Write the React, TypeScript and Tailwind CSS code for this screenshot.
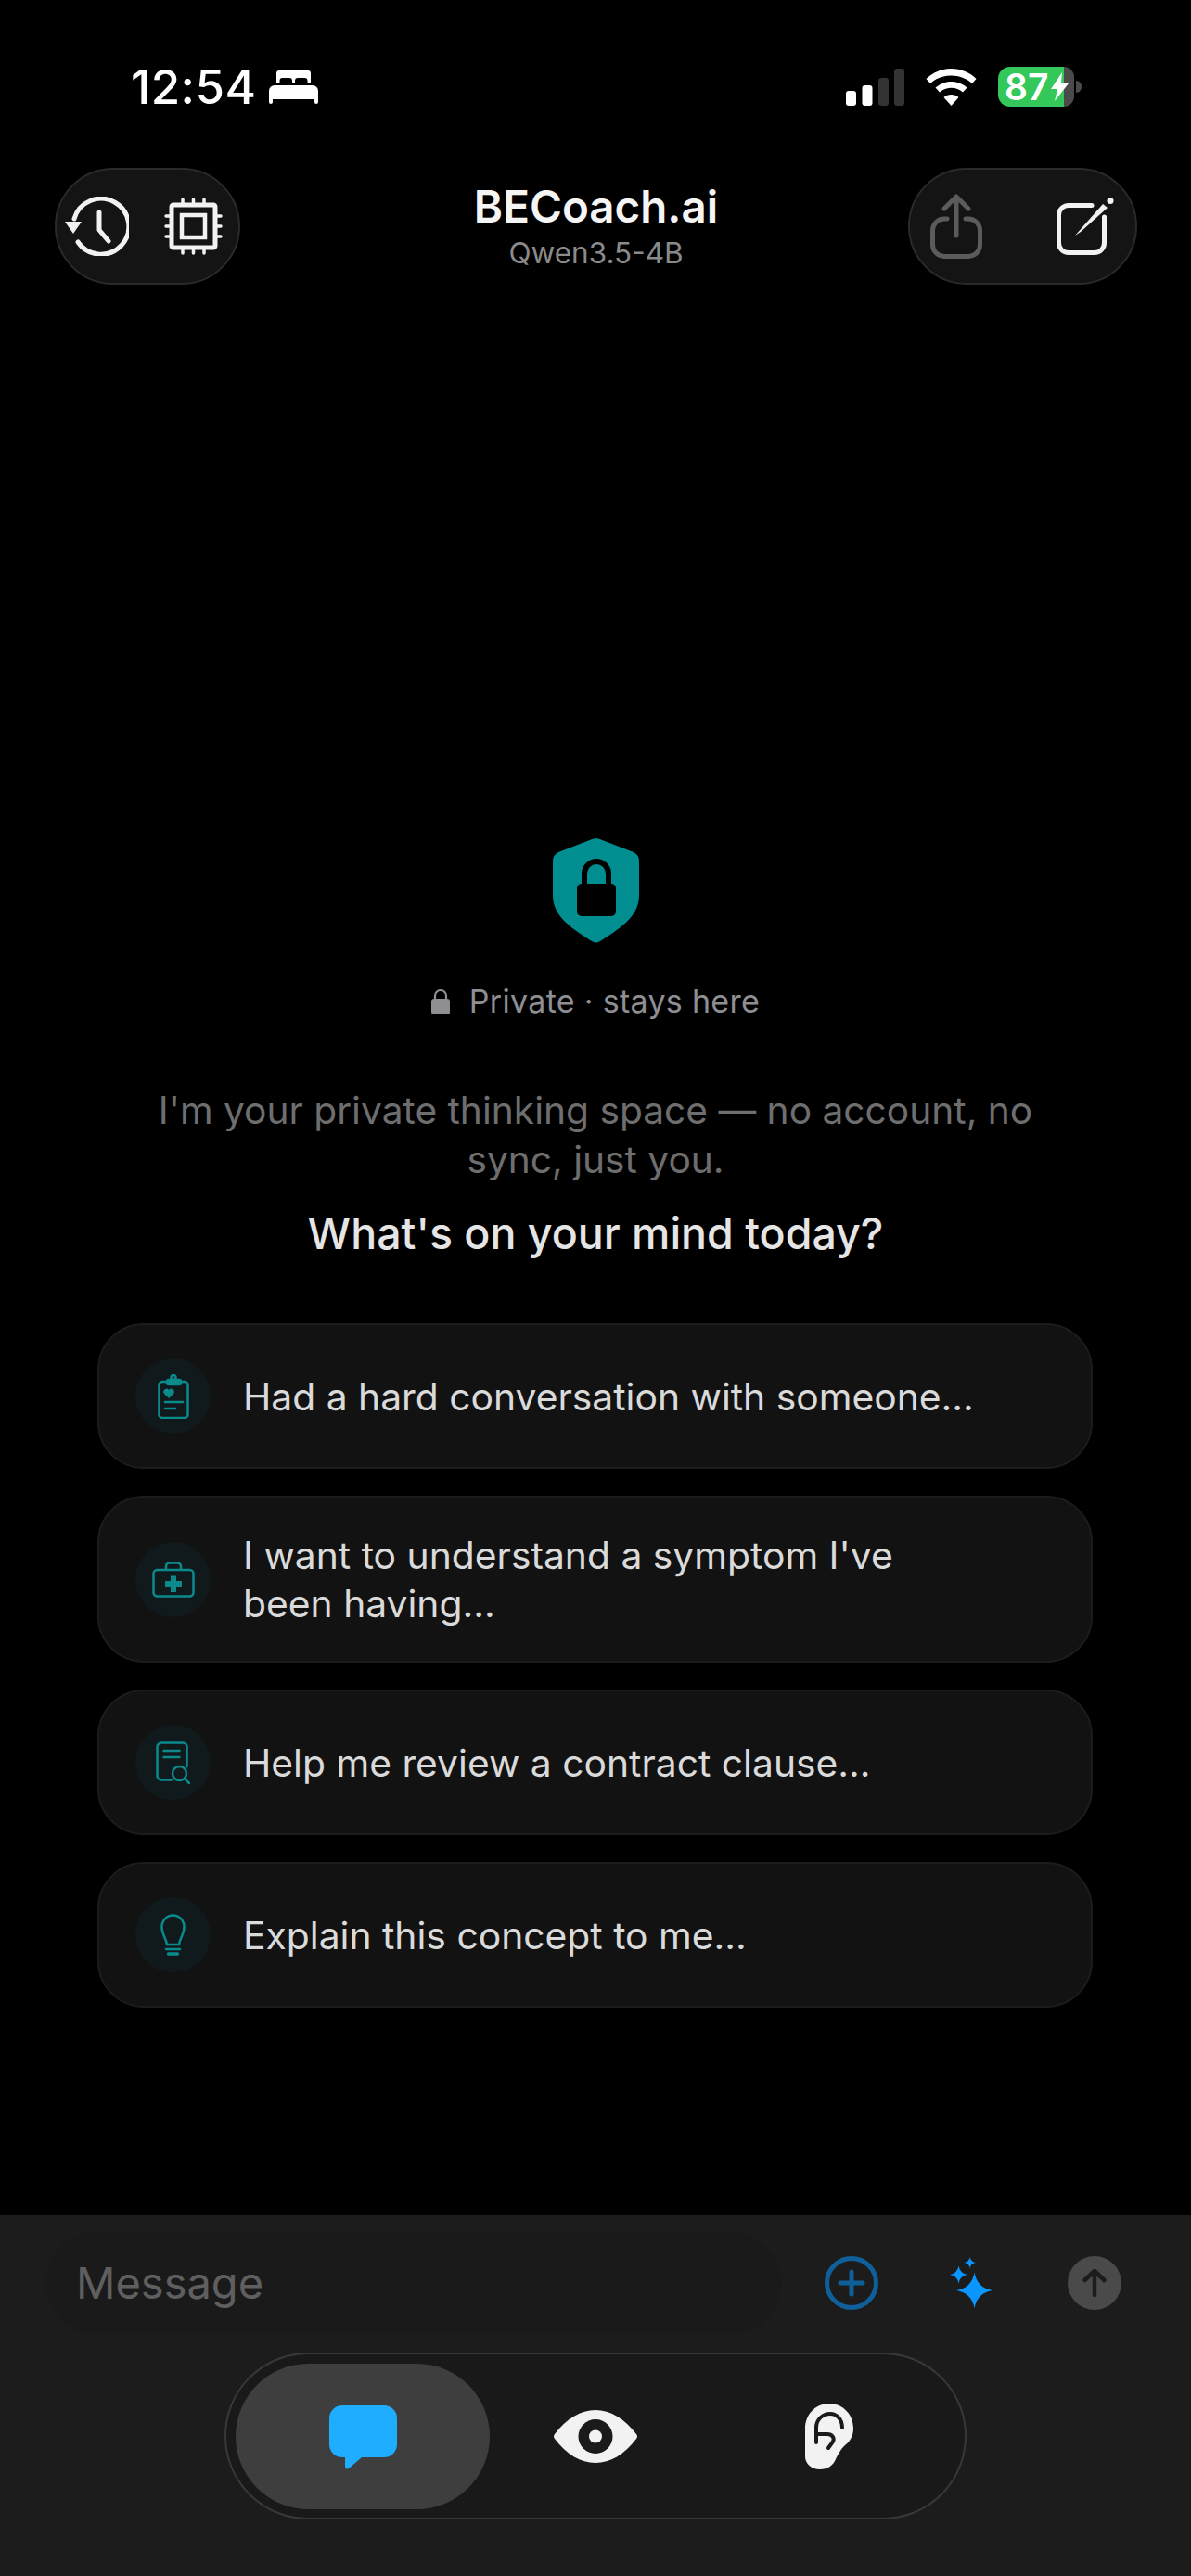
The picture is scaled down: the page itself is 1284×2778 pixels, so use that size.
import React from 'react';

const sans = "font-['Inter','Liberation_Sans',sans-serif]";

function star(cx: number, cy: number, r: number) {
    const k = r * 0.14;
    return `M${cx} ${cy - r}Q${cx + k} ${cy - k} ${cx + r} ${cy}Q${cx + k} ${cy + k} ${cx} ${cy + r}Q${cx - k} ${cy + k} ${cx - r} ${cy}Q${cx - k} ${cy - k} ${cx} ${cy - r}Z`;
}

function BedIcon() {
    return (
        <svg width="53" height="36" viewBox="0 0 53 36" fill="#fff">
            <path fillRule="evenodd" d="M8 3a3 3 0 0 1 3-3h31a3 3 0 0 1 3 3v11h-3.500v-3a3 3 0 0 0-3-3H31a3 3 0 0 0-3 3v3h-3v-3a3 3 0 0 0-3-3h-7.500a3 3 0 0 0-3 3v3H8Z" />
            <path d="M6 16h41a6 6 0 0 1 6 6v12a2 2 0 0 1-4 0v-3H4v3a2 2 0 0 1-4 0V22a6 6 0 0 1 6-6Z" />
        </svg>
    );
}

function SignalIcon() {
    return (
        <svg width="63" height="40" viewBox="0 0 63 40">
            <rect x="0" y="24" width="11" height="16" rx="3" fill="#fff" />
            <rect x="17.500" y="18" width="11" height="22" rx="3" fill="#fff" />
            <rect x="35" y="10" width="11" height="30" rx="3" fill="#333" />
            <rect x="52" y="0" width="11" height="40" rx="3" fill="#333" />
        </svg>
    );
}

function WifiIcon() {
    return (
        <svg width="55" height="40" viewBox="0 0 55 40" fill="#fff">
            <path d="M27.500 0C38 0 47.500 4 54.500 11l-4.500 5C44 10.500 36 7.500 27.500 7.500S11 10.500 5 16L.5 11C7.500 4 17 0 27.500 0Z" />
            <path d="M27.500 14c6.500 0 12.500 2.500 17 6.500l-4.500 5c-3.300-3-7.700-4.700-12.500-4.700s-9.200 1.700-12.500 4.700l-4.500-5c4.500-4 10.500-6.500 17-6.500Z" />
            <path d="M27.500 28c3 0 6 1.200 8 3L27.500 40l-8-9c2-1.800 5-3 8-3Z" />
        </svg>
    );
}

function Battery() {
    return (
        <div className="flex items-center gap-[2px]">
            <div className="relative flex h-[43px] w-[82px]">
                <div className="h-full w-[71px] rounded-l-[13px] bg-[#34c759]" />
                <div className="h-full w-[11px] rounded-r-[13px] bg-[#4a4a4a]" />
                <span className={`absolute left-[7px] top-0 text-[39px] font-semibold leading-[43px] text-white ${sans}`}>87</span>
                <svg className="absolute left-[57px] top-[6px]" width="19" height="31" viewBox="0 0 19 31" fill="#fff">
                    <path d="M12 0 0 18h7L4 31 19 12h-8Z" />
                </svg>
            </div>
            <div className="h-[13px] w-[6px] rounded-r-full bg-[#4a4a4a]" />
        </div>
    );
}

function HistoryIcon() {
    return (
        <svg width="69" height="64" viewBox="0 0 69 64" fill="none" stroke="#f2f2f2" strokeLinecap="round" strokeLinejoin="round">
            <path strokeWidth="5" d="M10 24A30 30 0 1 1 14 49" />
            <path fill="#f2f2f2" stroke="none" d="M0 27h18l-9 13Z" />
            <path strokeWidth="5" d="M37 17v19l10 12" />
        </svg>
    );
}

function ChipIcon() {
    return (
        <svg width="63" height="62" viewBox="0 0 63 62" fill="none" stroke="#f2f2f2">
            <rect x="8" y="8" width="47" height="46" rx="2" strokeWidth="5" />
            <rect x="19" y="19" width="25" height="24" strokeWidth="4.500" />
            <path strokeWidth="3.500" strokeLinecap="round" d="M20 2v5M31.500 2v5M43 2v5M20 55v5M31.500 55v5M43 55v5M2 20h5M2 31h5M2 42h5M56 20h5M56 31h5M56 42h5" />
        </svg>
    );
}

function ShareIcon() {
    return (
        <svg width="56" height="70" viewBox="0 0 56 70" fill="none" stroke="#5b5b5b" strokeWidth="5" strokeLinecap="round" strokeLinejoin="round">
            <path d="M18 27h-3A12.500 12.500 0 0 0 2.500 39.500V55A12.500 12.500 0 0 0 15 67.500h26A12.500 12.500 0 0 0 53.500 55V39.500A12.500 12.500 0 0 0 41 27h-3" />
            <path d="M28 45V3M15 16 28 3l13 13" />
        </svg>
    );
}

function ComposeIcon() {
    return (
        <svg width="62" height="62" viewBox="0 0 62 62" fill="none" stroke="#f2f2f2" strokeLinecap="round">
            <path strokeWidth="5" d="M38 8.500H13A10.500 10.500 0 0 0 2.500 19v30A10.500 10.500 0 0 0 13 59.500h28A10.500 10.500 0 0 0 51.500 49V21" />
            <path fill="#f2f2f2" stroke="none" d="M20 41 50 7l5 4-29 26-6 4Z" />
            <circle cx="58" cy="3.500" r="3.500" fill="#f2f2f2" stroke="none" />
        </svg>
    );
}

function ShieldIcon() {
    return (
        <svg width="93" height="113" viewBox="0 0 93 113">
            <path fill="#008e90" d="M46.500 0Q49 0 52 1.500L87 15Q93 18 93 24V62C93 85 70 99 50 111.500Q46.500 113.500 43 111.500C23 99 0 85 0 62V24Q0 18 6 15L41 1.500Q44 0 46.500 0Z" />
            <rect x="26" y="49" width="42" height="35" rx="5" fill="#000" />
            <path fill="none" stroke="#000" strokeWidth="6" d="M34 50V38a12.500 12.500 0 0 1 26 0v12" />
        </svg>
    );
}

function SmallLock() {
    return (
        <svg width="20" height="27" viewBox="0 0 20 27">
            <rect x="0" y="10" width="20" height="17" rx="3" fill="#8e8e93" />
            <path fill="none" stroke="#8e8e93" strokeWidth="2.200" d="M4 11V7a6 6 0 0 1 12 0v4" />
        </svg>
    );
}

const teal = '#0b8a8c';

function ClipboardIcon() {
    return (
        <svg width="34" height="48" viewBox="0 0 34 48" fill="none" stroke={teal} strokeWidth="2.500" strokeLinecap="round" strokeLinejoin="round">
            <path d="M9 8H5a3.500 3.500 0 0 0-3.500 3.500v32A3.500 3.500 0 0 0 5 47h24a3.500 3.500 0 0 0 3.500-3.500v-32A3.500 3.500 0 0 0 29 8h-4" />
            <rect x="10" y="6" width="15" height="5" rx="2" fill={teal} />
            <circle cx="17" cy="3.500" r="2.500" />
            <path fill={teal} stroke="none" d="M12 26 7 21a3 3 0 0 1 5-4 3 3 0 0 1 5 4Z" />
            <path d="M8 30h19M8 37h11" />
        </svg>
    );
}

function MedkitIcon() {
    return (
        <svg width="46" height="39" viewBox="0 0 46 39" fill="none" stroke={teal} strokeWidth="2.500" strokeLinejoin="round">
            <rect x="1.500" y="9" width="43" height="28.500" rx="4" />
            <path d="M15 9V5a3.500 3.500 0 0 1 3.500-3.500h9A3.500 3.500 0 0 1 31 5v4" />
            <path fill={teal} stroke="none" d="M20 15.500h6v5.500h6v6h-6v6h-6v-6h-6v-6h6Z" />
        </svg>
    );
}

function DocSearchIcon() {
    return (
        <svg width="37" height="46" viewBox="0 0 37 46" fill="none" stroke={teal} strokeWidth="2.500" strokeLinecap="round" strokeLinejoin="round">
            <path d="M17 41.500H6A4.500 4.500 0 0 1 1.500 37V6A4.500 4.500 0 0 1 6 1.500h23A4.500 4.500 0 0 1 33.500 6v21" />
            <path d="M8.500 10h17M8.500 17h17" />
            <circle cx="25.500" cy="34.500" r="7.500" />
            <path d="m31 40 5 5" />
        </svg>
    );
}

function BulbIcon() {
    return (
        <svg width="27" height="46" viewBox="0 0 27 46" fill="none" stroke={teal} strokeWidth="2.500" strokeLinecap="round">
            <path d="M7 33 C6 26 1.500 22 1.500 14 A12 12.500 0 0 1 25.500 14 C25.500 22 21 26 20 33 Z" />
            <path d="M6 38h15" />
            <path d="M8.500 43h10" strokeWidth="3.500" />
        </svg>
    );
}

function PlusCircle() {
    return (
        <svg width="58" height="58" viewBox="0 0 58 58" fill="none" stroke="#0f5f9b" strokeLinecap="round">
            <circle cx="29" cy="29" r="26.500" strokeWidth="5" />
            <path strokeWidth="5" d="M29 17v24M17 29h24" />
        </svg>
    );
}

function SparklesIcon() {
    return (
        <svg width="46" height="56" viewBox="0 0 46 56" fill="#0a96ff">
            <path d={star(26.500, 36, 19.500)} />
            <path d={star(9.500, 19, 9.500)} />
            <path d={star(21.700, 6, 6)} />
        </svg>
    );
}

function SendButton() {
    return (
        <div className="flex size-[58px] items-center justify-center rounded-full bg-[#4a4a4a]">
            <svg width="26" height="32" viewBox="0 0 26 32" fill="none" stroke="#1c1c1c" strokeWidth="4.500" strokeLinecap="round" strokeLinejoin="round">
                <path d="M13 29V3M2.500 13 13 3l10.500 10" />
            </svg>
        </div>
    );
}

function ChatIcon() {
    return (
        <svg width="73" height="69" viewBox="0 0 73 69" fill="#1fadff">
            <path d="M14 0h45a14 14 0 0 1 14 14v28a14 14 0 0 1-14 14H35L21 68q-4 2-4-3v-9h-3A14 14 0 0 1 0 42V14A14 14 0 0 1 14 0Z" />
        </svg>
    );
}

function EyeIcon() {
    return (
        <svg width="90" height="57" viewBox="0 0 90 57">
            <path fill="#f2f2f2" d="M1 26C14 9 29 0 45 0s31 9 44 26q2 2.500 0 5C76 48 61 57 45 57S14 48 1 31q-2-2.500 0-5Z" />
            <circle cx="45" cy="28.500" r="18.500" fill="#1a1a1a" />
            <circle cx="45" cy="28.500" r="7" fill="#f2f2f2" />
        </svg>
    );
}

function EarIcon() {
    return (
        <svg width="52" height="71" viewBox="0 0 52 71">
            <path fill="#f2f2f2" d="M26 0C41 0 52 12 52 27C52 35 48 41 43 45C38 50 36 54 33 60C30 67 24 71 16 71C7 71 0 65 0 57V27C0 12 11 0 26 0Z" />
            <path fill="none" stroke="#1a1a1a" strokeWidth="4" strokeLinecap="round" strokeLinejoin="round" d="M12 42V26C12 17 19 11 27 11C34 11 40 17 40 26M12 33H24C29 33 32 37 30 41L25 48" />
        </svg>
    );
}

const prompts = [
    { icon: <ClipboardIcon />, text: 'Had a hard conversation with someone...' },
    { icon: <MedkitIcon />, text: "I want to understand a symptom I've been having..." },
    { icon: <DocSearchIcon />, text: 'Help me review a contract clause...' },
    { icon: <BulbIcon />, text: 'Explain this concept to me...' },
];

export default function App() {
    return (
        <div className={`flex h-[2778px] w-[1284px] flex-col overflow-hidden bg-black ${sans}`}>
            {/* status bar */}
            <div className="mt-[72px] flex h-[43px] items-center justify-between pl-[141px] pr-[118px]">
                <div className="flex items-center gap-[13px]">
                    <span className="text-[51px] font-medium leading-[43px] tracking-[0.5px] text-white">12:54</span>
                    <BedIcon />
                </div>
                <div className="flex items-center gap-[23px]">
                    <SignalIcon />
                    <WifiIcon />
                    <Battery />
                </div>
            </div>

            {/* header */}
            <div className="mt-[66px] grid grid-cols-[1fr_auto_1fr] items-start pl-[59px] pr-[58px]">
                <div className="flex h-[126px] w-[200px] items-center gap-[38px] rounded-[63px] border-2 border-[#2a2a2a] bg-[#141414] pl-[9px]">
                    <HistoryIcon />
                    <ChipIcon />
                </div>
                <div className="flex flex-col items-center pt-[14px]">
                    <span className="text-[47.500px] font-semibold leading-[56px] text-[#f5f5f5]">BECoach.ai</span>
                    <span className="mt-[4px] text-[31.500px] leading-[36px] text-[#8a8a8a]">Qwen3.5-4B</span>
                </div>
                <div className="flex h-[126px] w-[247px] items-center gap-[80px] justify-self-end rounded-[63px] border-2 border-[#2a2a2a] bg-[#141414] pl-[22px]">
                    <ShareIcon />
                    <ComposeIcon />
                </div>
            </div>

            {/* privacy note */}
            <div className="mt-[597px] flex flex-col items-center">
                <ShieldIcon />
                <div className="mt-[43px] flex items-center gap-[21px]">
                    <SmallLock />
                    <span className="text-[34px] leading-[40px] tracking-[0.3px] text-[#8e8e93]">Private · stays here</span>
                </div>
                <p className="mt-[71px] w-[1000px] text-center text-[40.700px] leading-[53px] text-[#6e6e6e]">
                    I'm your private thinking space — no account, no sync, just you.
                </p>
                <h2 className="mt-[25px] text-[46.500px] font-medium leading-[56px] text-[#e5e5e5]">What's on your mind today?</h2>
            </div>

            {/* prompt cards */}
            <div className="mt-[69px] flex flex-col gap-[29px] pl-[105px] pr-[106px]">
                {prompts.map((p) => (
                    <div key={p.text} className="flex items-center gap-[35px] rounded-[50px] border-2 border-[#1c1c1c] bg-[#121212] px-[39px] py-[36px]">
                        <div className="flex size-[81px] shrink-0 items-center justify-center rounded-full bg-[#101a1c]">
                            {p.icon}
                        </div>
                        <span className="max-w-[800px] text-[40.800px] leading-[52px] text-[#dadada]">{p.text}</span>
                    </div>
                ))}
            </div>

            {/* composer and tab switcher */}
            <div className="mt-auto h-[389px] bg-[#1c1c1c] pt-[18px]">
                <div className="flex items-center pl-[49px]">
                    <div className="flex h-[110px] w-[793px] items-center rounded-[55px] bg-[#1a1a1a] pl-[33px]">
                        <span className="text-[47px] leading-[56px] text-[#5f5f5f]">Message</span>
                    </div>
                    <div className="ml-[47px]"><PlusCircle /></div>
                    <div className="ml-[77px]"><SparklesIcon /></div>
                    <div className="ml-[81px]"><SendButton /></div>
                </div>
                <div className="mx-auto mt-[20px] grid h-[180px] w-[800px] grid-cols-[274px_228px_276px] items-center rounded-[90px] border-2 border-[#383838] bg-[#191919] pl-[10px]">
                    <div className="flex h-[157px] items-center justify-center rounded-[79px] bg-[#3e3e3e]">
                        <div className="mt-[3px]"><ChatIcon /></div>
                    </div>
                    <div className="flex justify-center"><EyeIcon /></div>
                    <div className="flex justify-center"><EarIcon /></div>
                </div>
            </div>
        </div>
    );
}
